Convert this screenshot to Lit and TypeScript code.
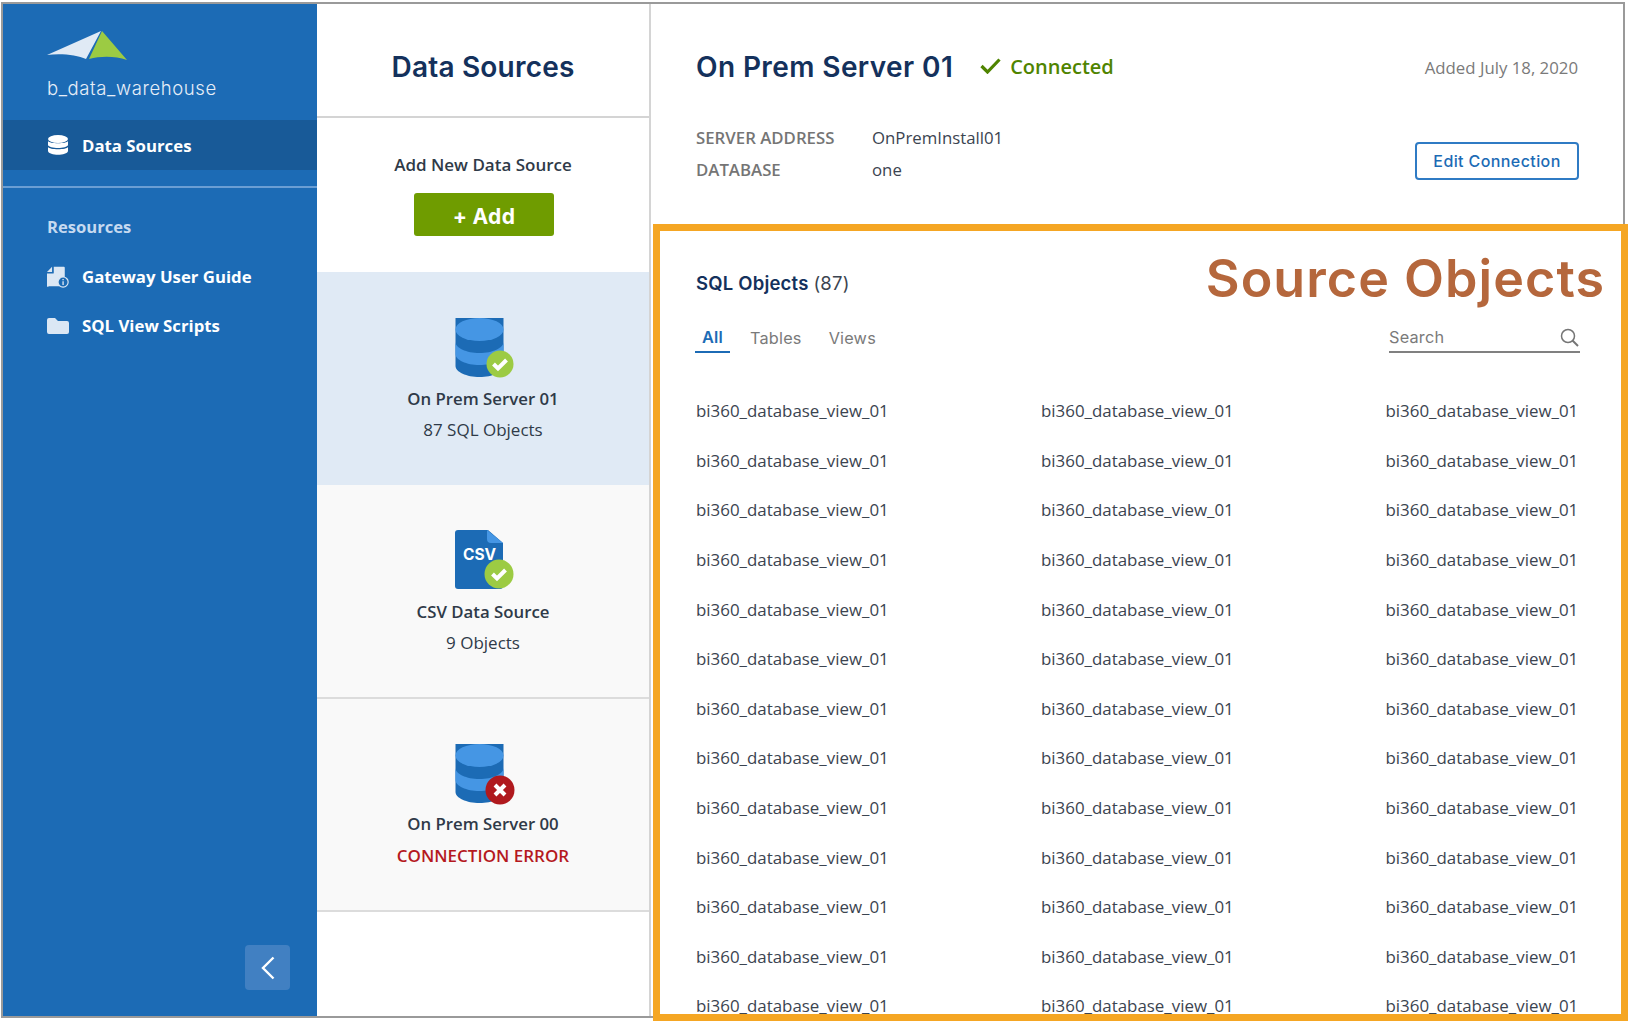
import { LitElement, css, html, svg, unsafeCSS } from "lit";
import { customElement } from "lit/decorators.js";

const BLUE = "#1c6bb5";
const LIGHT = "#4596e4";

const dbShape = svg`
  <path d="M.5 11v48c0 6 11 11 24 11s24-5 24-11V11z" fill="${BLUE}" transform="translate(0 -11)"/>
  <path d="M.5 24c0 6 11 11 24 11s24-5 24-11v12c0 6-11 11-24 11S.5 42 .5 36z" fill="${LIGHT}"/>
  <ellipse cx="24.5" cy="11.5" rx="24" ry="11.5" fill="${LIGHT}"/>`;

const okBadge = (cx: number, cy: number, r: number) => svg`
  <circle cx="${cx}" cy="${cy}" r="${r}" fill="#9ccb43"/>
  <path d="M${cx - 6.5} ${cy}l4.5 4.5 8.5-8.5" fill="none" stroke="#fff" stroke-width="4"/>`;

const errBadge = (cx: number, cy: number, r: number) => svg`
  <circle cx="${cx}" cy="${cy}" r="${r}" fill="#b0191e"/>
  <path d="M${cx - 5} ${cy - 5}l10 10M${cx + 5} ${cy - 5}l-10 10" fill="none" stroke="#fff" stroke-width="4"/>`;

const dbIcon = (badge: unknown) => html`
  <svg class="src-icon" width="62" height="62" viewBox="0 0 62 62">${dbShape}${badge}</svg>`;

const csvIcon = html`
  <svg class="src-icon" width="62" height="62" viewBox="0 0 62 62">
    <path d="M3 1h30l15 13v43a3 3 0 0 1-3 3H3a3 3 0 0 1-3-3V4a3 3 0 0 1 3-3z" fill="${BLUE}"/>
    <path d="M32 1l16 13H36a4 4 0 0 1-4-4z" fill="${LIGHT}"/>
    <text x="8" y="31" class="csv-text">CSV</text>
    ${okBadge(44, 45, 14.5)}
  </svg>`;

const sources = [
  { name: "On Prem Server 01", sub: "87 SQL Objects", icon: dbIcon(okBadge(45, 46, 13.5)), cls: "selected" },
  { name: "CSV Data Source", sub: "9 Objects", icon: csvIcon, cls: "csv" },
  { name: "On Prem Server 00", sub: "CONNECTION ERROR", icon: dbIcon(errBadge(45, 46, 14.5)), cls: "error" },
];

const objects = Array.from({ length: 39 }, () => "bi360_database_view_01");

@customElement("app-root")
export class AppRoot extends LitElement {
  static styles = css`
    :host {
      display: block;
      width: 1629px;
      height: 1023px;
      overflow: hidden;
      background: #fff;
      font-family: "Open Sans", sans-serif;
      color: #2f3a48;
    }
    * {
      box-sizing: border-box;
    }
    .frame {
      display: flex;
      width: 1624px;
      height: 1016px;
      margin: 2px 0 0 1px;
      border: 2px solid #9a9a9a;
    }

    /* sidebar */
    .sidebar {
      width: 314px;
      flex: none;
      display: flex;
      flex-direction: column;
      background: ${unsafeCSS(BLUE)};
      color: #fff;
    }
    .brand {
      height: 116px;
      padding: 26px 0 0 44px;
    }
    .brand svg {
      display: block;
    }
    .brand-name {
      margin-top: 14px;
      font: 300 18.5px/24px Inter, sans-serif;
      letter-spacing: 0.6px;
      color: #e6eef8;
    }
    .nav-row {
      display: flex;
      align-items: center;
      gap: 13px;
      padding-left: 44px;
      height: 50px;
      font-size: 16.8px;
      font-weight: 700;
    }
    .nav-row svg {
      width: 22px;
      flex: none;
    }
    .nav-row.active {
      background: #185a98;
    }
    .divider {
      height: 2px;
      margin-top: 16px;
      background: #6a9ed4;
    }
    .res-title {
      margin: 28px 0 14px 44px;
      font-size: 16.6px;
      line-height: 22px;
      font-weight: 700;
      color: #c6daf0;
    }
    .res-list .nav-row {
      height: 49px;
    }
    .collapse {
      margin: auto 27px 26px auto;
      width: 45px;
      height: 45px;
      border-radius: 4px;
      background: #4180c2;
      display: flex;
      align-items: center;
      justify-content: center;
    }

    /* sources column */
    .sources {
      width: 334px;
      flex: none;
      display: flex;
      flex-direction: column;
      border-right: 2px solid #d4d4d4;
    }
    .sources-head {
      height: 114px;
      flex: none;
      display: flex;
      align-items: center;
      justify-content: center;
      padding-top: 13px;
      border-bottom: 2px solid #d4d4d4;
      font: 600 28px/1 Inter, sans-serif;
      letter-spacing: 0.2px;
      color: #14315c;
    }
    .add {
      height: 154px;
      flex: none;
      display: flex;
      flex-direction: column;
      align-items: center;
      padding-top: 35px;
    }
    .add-label {
      font-size: 17px;
      line-height: 24px;
      font-weight: 600;
    }
    .add-btn {
      margin: 16px 0 0 2px;
      width: 140px;
      height: 43px;
      padding-top: 3px;
      border-radius: 3px;
      background: #6f9c00;
      color: #fff;
      display: flex;
      align-items: center;
      justify-content: center;
      font: 700 21px/1 Inter, sans-serif;
      letter-spacing: 0.3px;
    }
    .source {
      height: 213px;
      flex: none;
      display: flex;
      flex-direction: column;
      align-items: center;
      padding-top: 45px;
      background: #f9f9f9;
      border-bottom: 2px solid #dcdcdc;
    }
    .source.selected {
      padding-top: 46px;
      background: #e0eaf5;
      border-bottom: none;
    }
    .source.csv {
      height: 214px;
      padding-top: 44px;
    }
    .src-icon {
      display: block;
      margin-left: 5px;
    }
    .csv-text {
      font: 700 15.5px Inter, sans-serif;
      fill: #fff;
    }
    .source-name {
      margin-top: 7px;
      font-size: 16.8px;
      line-height: 24px;
      font-weight: 600;
    }
    .source.csv .source-name {
      margin-top: 9px;
    }
    .source-sub {
      margin-top: 7px;
      font-size: 17px;
      line-height: 24px;
    }
    .source.error .source-name {
      margin-top: 6px;
    }
    .source.error .source-sub {
      margin-top: 8px;
      color: #b5191f;
      font-weight: 600;
    }

    /* detail pane */
    .detail {
      flex: 1;
      min-width: 0;
      display: flex;
      flex-direction: column;
    }
    .summary {
      height: 220px;
      flex: none;
      padding: 45px 44px 0 45px;
    }
    .title-row {
      display: flex;
      align-items: center;
      height: 36px;
    }
    .title {
      font: 600 28px/36px Inter, sans-serif;
      letter-spacing: 0.4px;
      color: #14315c;
    }
    .status {
      display: flex;
      align-items: center;
      gap: 9px;
      margin-left: 27px;
      padding-bottom: 2px;
      font-size: 20px;
      font-weight: 600;
      color: #4f8400;
    }
    .added {
      margin: 0 1px 0 auto;
      font-size: 16.8px;
      color: #7a7a7a;
    }
    .info-row {
      display: flex;
      align-items: flex-end;
      justify-content: space-between;
      margin-top: 36px;
    }
    .info {
      display: grid;
      grid-template-columns: 176px auto;
      grid-auto-rows: 32px;
      align-items: center;
      font-size: 16.8px;
    }
    .info dt {
      color: #757575;
      font-weight: 600;
    }
    .info dd {
      margin: 0;
      color: #3b4450;
    }
    dl {
      margin: 0;
    }
    .edit-btn {
      width: 164px;
      height: 38px;
      border: 2px solid #2f7bc4;
      border-radius: 4px;
      color: #1c6bb5;
      display: flex;
      align-items: center;
      justify-content: center;
      font: 500 16px/1 Inter, sans-serif;
      letter-spacing: 0.4px;
      margin-bottom: 5px;
    }
    .objects {
      position: relative;
      flex: 1;
      min-height: 0;
      margin: 0 -5px -5px 2px;
      padding: 40px 41px 0 35px;
      border: 7px solid #f5a623;
      overflow: hidden;
    }
    .obj-title {
      font: 600 18.5px/24px Inter, sans-serif;
      letter-spacing: 0.2px;
      color: #14315c;
      margin-left: 1px;
    }
    .obj-title span {
      font-weight: 400;
      color: #3b4450;
    }
    .annotation {
      position: absolute;
      top: 18px;
      right: 16px;
      font: 600 52px/60px Inter, sans-serif;
      color: #b5673c;
      letter-spacing: 1.05px;
    }
    .toolbar {
      display: flex;
      justify-content: space-between;
      margin-top: 28px;
    }
    .tabs {
      display: flex;
      gap: 13px;
      font: 400 16.3px/1 Inter, sans-serif;
      letter-spacing: 0.2px;
      color: #7a7a7a;
    }
    .tab {
      height: 30px;
      padding: 0 7px;
      display: flex;
      align-items: center;
    }
    .tab.active {
      color: #1c6bb5;
      font-weight: 600;
      border-bottom: 2px solid #1c6bb5;
    }
    .search {
      width: 191px;
      height: 30px;
      padding: 0 1px 0 0;
      display: flex;
      align-items: center;
      justify-content: space-between;
      border-bottom: 2px solid #808080;
      font: 400 16.3px/1 Inter, sans-serif;
      letter-spacing: 0.2px;
      color: #7a7a7a;
    }
    .grid {
      display: grid;
      grid-template-columns: 345px 344.5px auto;
      grid-auto-rows: 49.6px;
      align-items: center;
      margin: 33px 0 0 1px;
      font-size: 16.9px;
      color: #3b4450;
      white-space: nowrap;
    }
  `;

  render() {
    return html`
      <div class="frame">
        <aside class="sidebar">
          <div class="brand">
            <svg width="82" height="32" viewBox="0 0 82 32">
              <path d="M0 25 54 1 39 29C30 25 14 23 0 25z" fill="#e0eaf5"/>
              <path d="M55 1 80 30C68 26 54 26 42 29z" fill="#9ccb43"/>
            </svg>
            <div class="brand-name">b_data_warehouse</div>
          </div>
          <div class="nav-row active">
            <svg height="20" viewBox="0 0 22 20" fill="#fff">
              <ellipse cx="11" cy="4" rx="10" ry="4"/>
              <path d="M1 6c1 3 19 3 20 0v4c-1 4-19 4-20 0z"/>
              <path d="M1 12c1 3 19 3 20 0v4c-1 5-19 5-20 0z"/>
            </svg>
            Data Sources
          </div>
          <div class="divider"></div>
          <div class="res-title">Resources</div>
          <div class="res-list">
            <div class="nav-row">
              <svg height="26" viewBox="0 0 26 26">
                <path d="M8 1h12a1 1 0 0 1 1 1v21a1 1 0 0 1-1 1H2a1 1 0 0 1-2-1V9h7a1 1 0 0 0 1-1z" fill="#dbe7f4"/>
                <path d="M6 1v6H0z" fill="#dbe7f4"/>
                <circle cx="19" cy="19" r="6" fill="${BLUE}" stroke="#dbe7f4" stroke-width="1.4"/>
                <path d="M19 18v4.5M19 15.5v1.3" stroke="#dbe7f4" stroke-width="1.6"/>
              </svg>
              Gateway User Guide
            </div>
            <div class="nav-row">
              <svg height="18" viewBox="0 0 22 18">
                <path d="M2 1h6l3 3h9a2 2 0 0 1 2 2v9a2 2 0 0 1-2 2H2a2 2 0 0 1-2-2V3a2 2 0 0 1 2-2z" fill="#dbe7f4"/>
              </svg>
              SQL View Scripts
            </div>
          </div>
          <div class="collapse">
            <svg width="14" height="24" viewBox="0 0 14 24">
              <path d="M12.5 1.5 2 12l10.5 10.5" fill="none" stroke="#fff" stroke-width="2.4"/>
            </svg>
          </div>
        </aside>

        <section class="sources">
          <div class="sources-head">Data Sources</div>
          <div class="add">
            <div class="add-label">Add New Data Source</div>
            <div class="add-btn">+ Add</div>
          </div>
          ${sources.map(
            (s) => html`
              <div class="source ${s.cls}">
                ${s.icon}
                <div class="source-name">${s.name}</div>
                <div class="source-sub">${s.sub}</div>
              </div>
            `
          )}
        </section>

        <main class="detail">
          <div class="summary">
            <div class="title-row">
              <div class="title">On Prem Server 01</div>
              <div class="status">
                <svg width="21" height="16" viewBox="0 0 21 16">
                  <path d="M1.5 8l6 6L19.5 1.5" fill="none" stroke="#4f8400" stroke-width="3.2"/>
                </svg>
                Connected
              </div>
              <div class="added">Added July 18, 2020</div>
            </div>
            <div class="info-row">
              <dl class="info">
                <dt>SERVER ADDRESS</dt>
                <dd>OnPremInstall01</dd>
                <dt>DATABASE</dt>
                <dd>one</dd>
              </dl>
              <div class="edit-btn">Edit Connection</div>
            </div>
          </div>
          <div class="objects">
            <div class="annotation">Source Objects</div>
            <div class="obj-title">SQL Objects <span>(87)</span></div>
            <div class="toolbar">
              <div class="tabs">
                <div class="tab active">All</div>
                <div class="tab">Tables</div>
                <div class="tab">Views</div>
              </div>
              <div class="search">
                Search
                <svg width="19" height="19" viewBox="0 0 19 19">
                  <circle cx="8" cy="8" r="6.5" fill="none" stroke="#757575" stroke-width="1.5"/>
                  <path d="M12.5 12.5 18 18" stroke="#757575" stroke-width="2"/>
                </svg>
              </div>
            </div>
            <div class="grid">
              ${objects.map((o) => html`<div>${o}</div>`)}
            </div>
          </div>
        </main>
      </div>
    `;
  }
}
